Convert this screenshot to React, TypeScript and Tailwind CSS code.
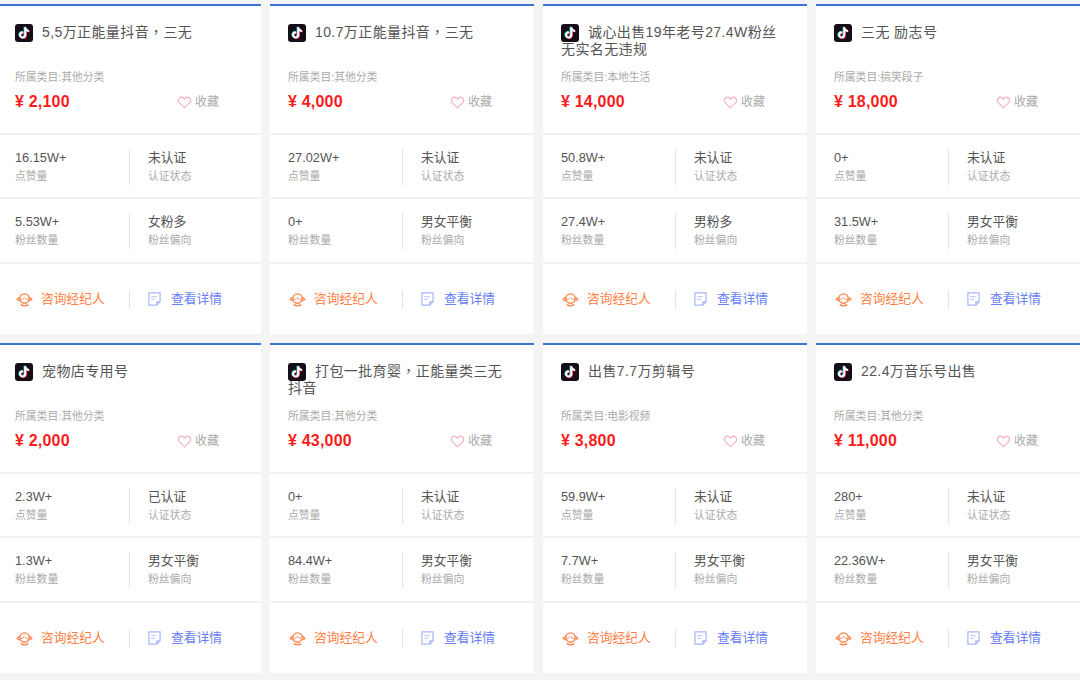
const items = [
  { title: '5,5万正能量抖音，三无', cat: '其他分类', price: '2,100', likes: '16.15W+', auth: '未认证', fans: '5.53W+', bias: '女粉多' },
  { title: '10.7万正能量抖音，三无', cat: '其他分类', price: '4,000', likes: '27.02W+', auth: '未认证', fans: '0+', bias: '男女平衡' },
  { title: '诚心出售19年老号27.4W粉丝无实名无违规', cat: '本地生活', price: '14,000', likes: '50.8W+', auth: '未认证', fans: '27.4W+', bias: '男粉多' },
  { title: '三无 励志号', cat: '搞笑段子', price: '18,000', likes: '0+', auth: '未认证', fans: '31.5W+', bias: '男女平衡' },
  { title: '宠物店专用号', cat: '其他分类', price: '2,000', likes: '2.3W+', auth: '已认证', fans: '1.3W+', bias: '男女平衡' },
  { title: '打包一批育婴，正能量类三无抖音', cat: '其他分类', price: '43,000', likes: '0+', auth: '未认证', fans: '84.4W+', bias: '男女平衡' },
  { title: '出售7.7万剪辑号', cat: '电影视频', price: '3,800', likes: '59.9W+', auth: '未认证', fans: '7.7W+', bias: '男女平衡' },
  { title: '22.4万音乐号出售', cat: '其他分类', price: '11,000', likes: '280+', auth: '未认证', fans: '22.36W+', bias: '男女平衡' },
];

const NOTE = 'M16.6 5.82A4.28 4.28 0 0 1 15.54 3h-3.09v12.4a2.59 2.59 0 0 1-2.59 2.5 2.6 2.6 0 0 1-2.6-2.6c0-1.72 1.66-3.01 3.37-2.48V9.66c-3.45-.46-6.47 2.22-6.47 5.64 0 3.33 2.76 5.7 5.69 5.7 3.14 0 5.69-2.55 5.69-5.7V9.01a7.35 7.35 0 0 0 4.3 1.38V7.3s-1.88.09-3.24-1.48z';

const TikTok = () => (
  <svg viewBox="0 0 24 24" className="w-[18px] h-[18px] shrink-0 rounded-[3px] bg-[#160d17]">
    <g transform="translate(2 1.800) scale(.84)">
      <path d={NOTE} fill="#25f4ee" transform="translate(-1.100 -.7)" />
      <path d={NOTE} fill="#fe2c55" transform="translate(1.100 .7)" />
      <path d={NOTE} fill="#fff" />
    </g>
  </svg>
);

const Heart = () => (
  <svg viewBox="0 0 24 24" fill="none" stroke="#f7b0c0" strokeWidth="1.800" className="w-[15px] h-[15px]">
    <path d="M12 20.500 3.600 12.300a5 5 0 0 1 0-7.100 5 5 0 0 1 7 0L12 6.600l1.400-1.400a5 5 0 0 1 7 0 5 5 0 0 1 0 7.100z" />
  </svg>
);

const Agent = () => (
  <svg viewBox="0 0 18 16" fill="none" stroke="#ff8147" strokeWidth="1.500" className="w-[17px] h-[15px] shrink-0">
    <circle cx="9" cy="7" r="5" />
    <path d="M4 8.500c2.500-.4 4-1.200 5-2.500 1 1.300 2.500 2.100 5 2.500" strokeWidth="1" />
    <path d="M3.500 5.500 1.200 8l2.300 1.500M14.500 5.500 16.800 8l-2.300 1.500" strokeWidth="1.300" />
    <path d="M5 13.500c2.500 1.600 5.500 1.600 8 0" />
  </svg>
);

const Doc = () => (
  <svg viewBox="0 0 14 15" fill="none" stroke="#a9b6fb" strokeWidth="1.300" className="w-[13px] h-[14px] shrink-0">
    <path d="M1 1h12v9.500L9.500 14H1z" />
    <path d="M3.500 5h6M3.500 8h4" stroke="#c5cdfc" />
    <path d="M13 10.500H9.500V14" />
  </svg>
);

const Stat = ({ value, label, right }: { value: string; label: string; right?: boolean }) => (
  <div className={right ? 'flex-1 pl-[18px] border-l border-[#e4e4e4]' : 'w-[132px] pl-[18px]'}>
    <div className="text-[12.750px] leading-[18px] text-[#555]">{value}</div>
    <div className="text-[10.800px] leading-[18px] text-[#aaa]">{label}</div>
  </div>
);

const Card = ({ item }: { item: (typeof items)[number] }) => (
  <div className="w-[264px] h-[330px] bg-white border-t-2 border-[#3f72d4] flex flex-col">
    <div className="h-[129px] px-[18px] pt-[18px] border-b-2 border-[#f1f1f1] flex flex-col">
      <div className="h-[35px] text-[14px] leading-[17px] tracking-[0.4px] text-[#555]">
        <TikTok />
        {/* the reference sets the full-width comma centred, as the TC cut of the font does */}
        <div className={item.title.includes('，') ? "-mt-[18px] indent-[27px] pr-[10px] font-['Liberation_Sans','Noto_Sans_CJK_TC',sans-serif]" : '-mt-[18px] indent-[27px] pr-[10px]'}>
          {item.title}
        </div>
      </div>
      <div className="mt-[9px] text-[10.800px] leading-[18px] text-[#aaa]">所属类目:{item.cat}</div>
      <div className="mt-[4px] flex items-center">
        <div className="w-[162px] text-[16px] leading-[24px] font-bold tracking-[0.2px] text-[#fb1c1c]">¥ {item.price}</div>
        <Heart />
        <span className="ml-[3px] text-[12px] text-[#aaa]">收藏</span>
      </div>
    </div>
    <div className="h-[64px] pt-[2px] flex items-center border-b-2 border-[#f1f1f1]">
      <Stat value={item.likes} label="点赞量" />
      <Stat value={item.auth} label="认证状态" right />
    </div>
    <div className="h-[65px] flex items-center border-b-2 border-[#f1f1f1]">
      <Stat value={item.fans} label="粉丝数量" />
      <Stat value={item.bias} label="粉丝偏向" right />
    </div>
    <div className="flex-1 flex items-center">
      <div className="w-[132px] pl-[19px] flex items-center gap-[8px] text-[12.750px] text-[#ff8147]">
        <Agent />
        咨询经纪人
      </div>
      <div className="flex-1 pl-[18px] h-[19px] border-l border-[#e4e4e4] flex items-center gap-[10px] text-[12.750px] text-[#6a7ff5]">
        <Doc />
        查看详情
      </div>
    </div>
  </div>
);

export default function App() {
  return (
    <div className="w-[1080px] h-[680px] overflow-hidden bg-[#f4f4f4] font-['Liberation_Sans','Noto_Sans_CJK_SC',sans-serif]">
      <div className="w-[1083px] -ml-[3px] pt-[4px] grid grid-cols-4 gap-x-[9px] gap-y-[9px]">
        {items.map((item) => (
          <Card key={item.title} item={item} />
        ))}
      </div>
    </div>
  );
}
